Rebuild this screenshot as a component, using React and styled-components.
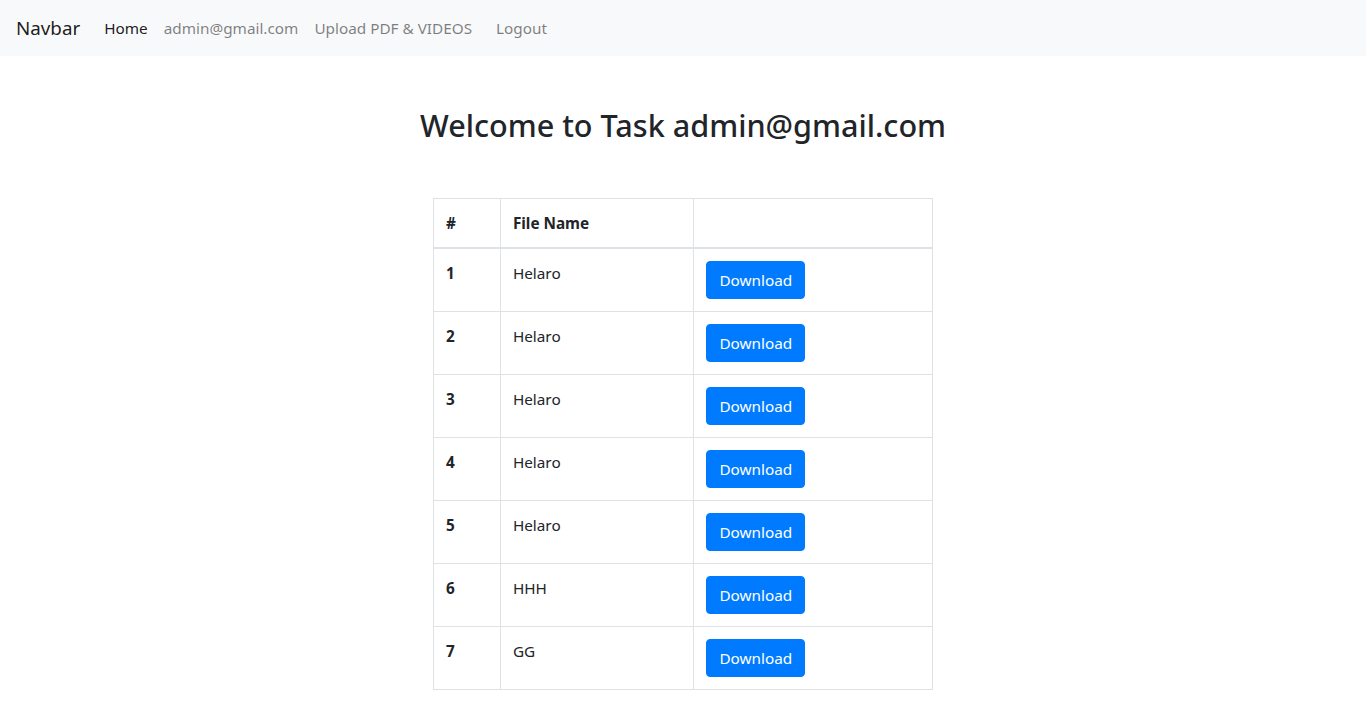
import React from 'react';
import styled, { createGlobalStyle } from 'styled-components';

const GlobalStyle = createGlobalStyle`
  * { box-sizing: border-box; }
  body {
    margin: 0;
    font-family: "Noto Sans", "Open Sans", sans-serif;
    font-size: 15.3px;
    line-height: 24px;
    color: #212529;
    background: #fff;
  }
`;

const Nav = styled.nav`
  display: flex;
  align-items: center;
  height: 56px;
  padding: 8px 16px;
  background: #f8f9fa;
`;

const Brand = styled.a`
  font-size: 18.8px;
  line-height: 30px;
  margin-right: 16px;
  color: rgba(0, 0, 0, 0.9);
  text-decoration: none;
`;

const NavList = styled.div`
  display: flex;
  align-items: center;
`;

const NavLink = styled.a`
  padding: 8px;
  margin-left: ${(p) => p.gap || 0}px;
  color: ${(p) => (p.active ? 'rgba(0,0,0,0.9)' : 'rgba(0,0,0,0.5)')};
  text-decoration: none;
`;

const Main = styled.main`
  display: flex;
  flex-direction: column;
  align-items: center;
`;

const Title = styled.h2`
  margin: 50px 0 0;
  font-size: 30.6px;
  font-weight: 500;
  line-height: 38.4px;
`;

const Table = styled.table`
  margin-top: 54px;
  width: 500px;
  border-collapse: collapse;
  color: #212529;
`;

const Th = styled.th`
  padding: 12px;
  text-align: left;
  font-weight: 700;
  vertical-align: bottom;
  border: 1px solid #dee2e6;
  border-bottom-width: 2px;
  width: ${(p) => p.w}px;
`;

const Td = styled.td`
  padding: 12px;
  vertical-align: top;
  border: 1px solid #dee2e6;
  font-weight: ${(p) => (p.bold ? 700 : 400)};
`;

const Button = styled.button`
  display: inline-block;
  padding: 6px 12px;
  font-family: inherit;
  font-size: 15.3px;
  line-height: 24px;
  color: #fff;
  background: #007bff;
  border: 1px solid #007bff;
  border-radius: 4px;
  cursor: pointer;
`;

const files = ['Helaro', 'Helaro', 'Helaro', 'Helaro', 'Helaro', 'HHH', 'GG'];

export default function App() {
  return (
    <>
      <GlobalStyle />
      <Nav>
        <Brand href="#">Navbar</Brand>
        <NavList>
          <NavLink active href="#">Home</NavLink>
          <NavLink href="#">admin@gmail.com</NavLink>
          <NavLink href="#">Upload PDF &amp; VIDEOS</NavLink>
          <NavLink gap={8} href="#">Logout</NavLink>
        </NavList>
      </Nav>
      <Main>
        <Title>Welcome to Task admin@gmail.com</Title>
        <Table>
          <thead>
            <tr>
              <Th w={67}>#</Th>
              <Th w={194}>File Name</Th>
              <Th w={239}></Th>
            </tr>
          </thead>
          <tbody>
            {files.map((f, i) => (
              <tr key={i}>
                <Td bold>{i + 1}</Td>
                <Td>{f}</Td>
                <Td>
                  <Button>Download</Button>
                </Td>
              </tr>
            ))}
          </tbody>
        </Table>
      </Main>
    </>
  );
}
